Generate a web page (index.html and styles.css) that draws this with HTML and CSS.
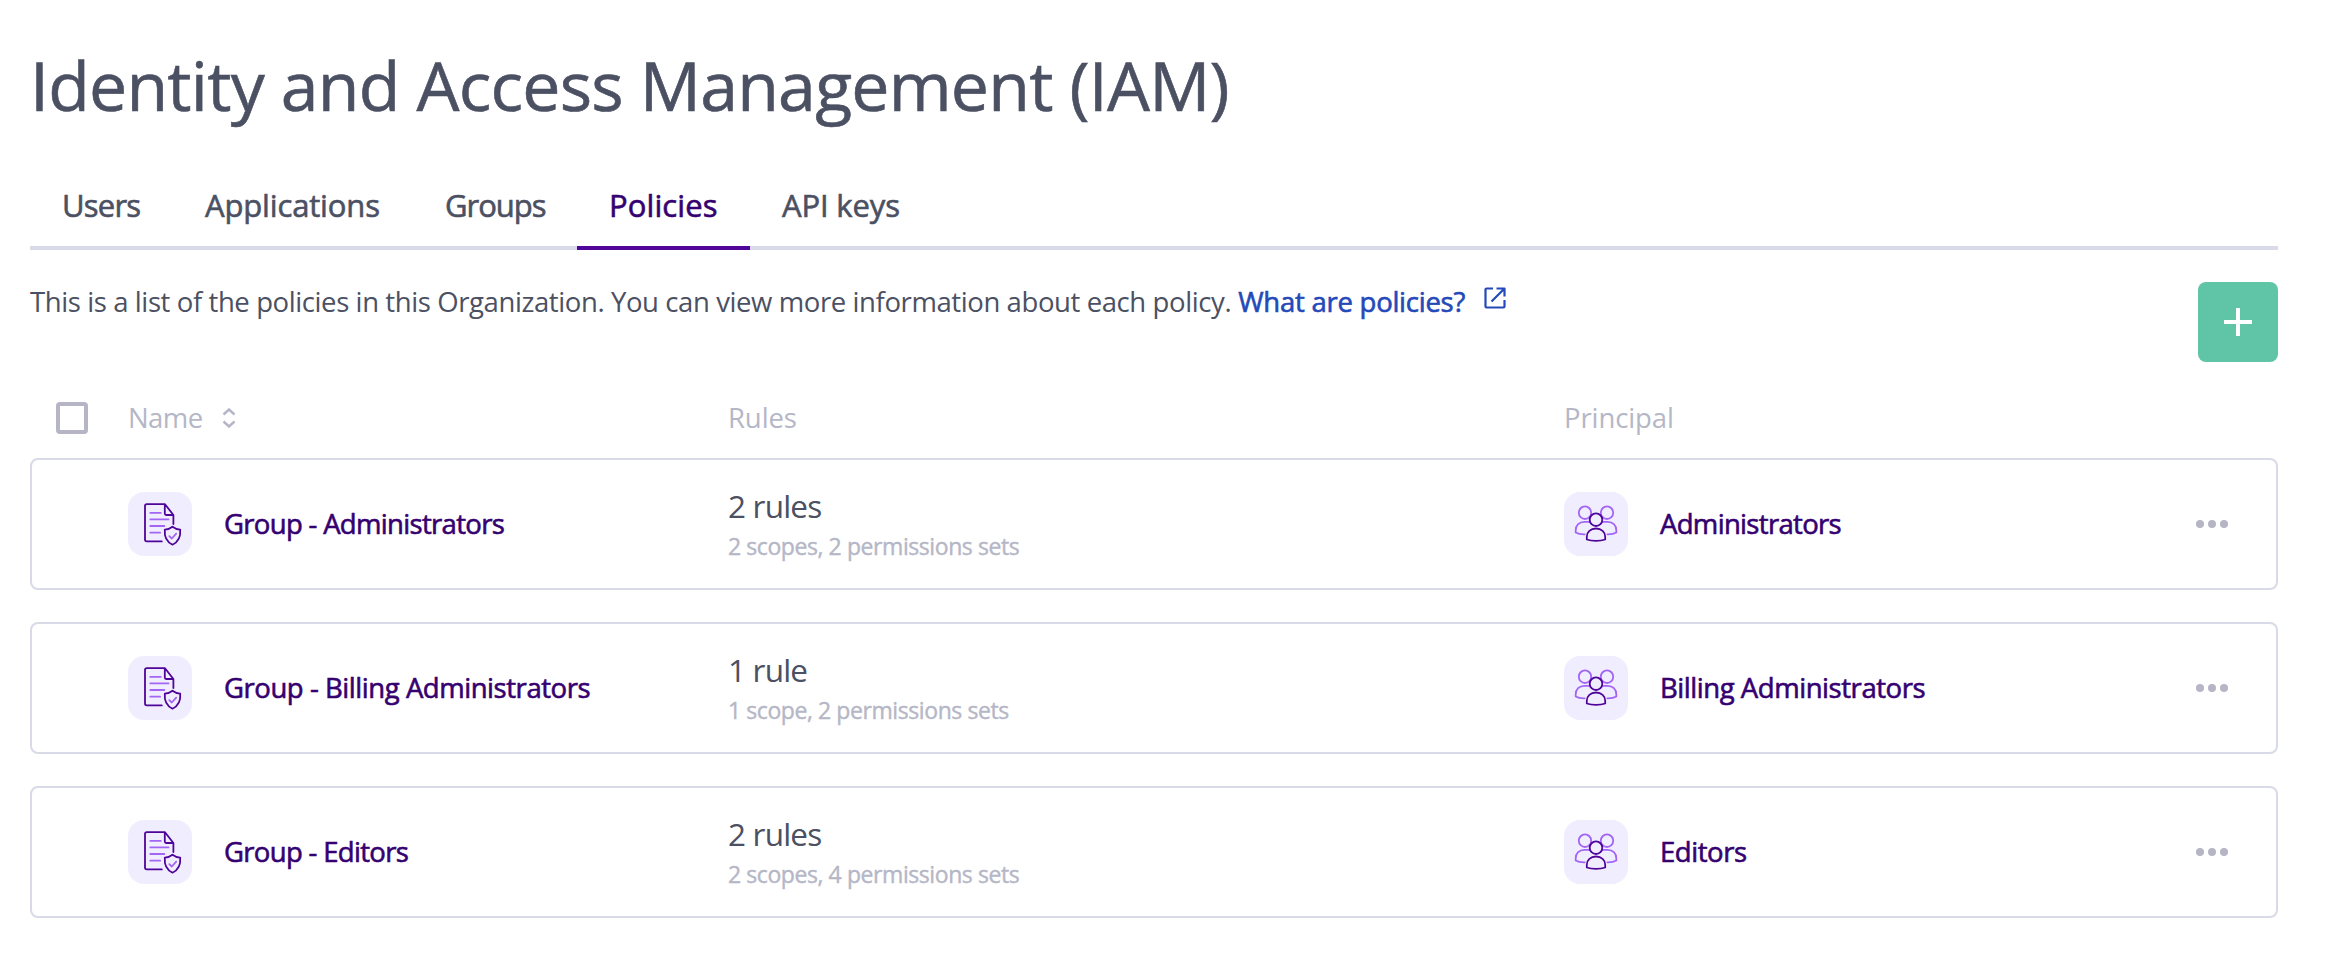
FILE: index.html
```html
<!DOCTYPE html>
<html lang="en">
<head>
<meta charset="utf-8">
<title>Identity and Access Management (IAM)</title>
<link rel="stylesheet" href="styles.css">
</head>
<body>
<svg class="sprite" aria-hidden="true">
  <symbol id="policy" viewBox="0 0 64 64">
    <g fill="none" stroke-width="1.8" stroke-linecap="round" stroke-linejoin="round">
      <path stroke="#4f0599" d="M45.4 32V23L37 12.2H18.8a1.8 1.8 0 0 0-1.8 1.8v33.6a1.8 1.8 0 0 0 1.8 1.8H33.8M36.8 12.6v9a1.4 1.4 0 0 0 1.4 1.4h7"/>
      <path stroke="#4f0599" d="M44.5 34.7c2.4 1.8 4.9 2.8 7.7 3 .6 7.1-1.6 12.2-7.7 15-6.1-2.8-8.3-7.9-7.7-15 2.8-.2 5.300-1.200 7.700-3z"/>
      <path stroke="#a365f6" d="M22.300 20.900h10.500M22.300 27.400h18.200M22.300 34h14M22.300 40.700h9.800M41.300 44.200l2.500 2.300 4.400-4.900"/>
    </g>
  </symbol>
  <symbol id="group" viewBox="0 0 64 64">
    <g fill="none" stroke-width="1.8" stroke-linecap="round" stroke-linejoin="round">
      <path stroke="#a365f6" d="M25.300 29.800h-5c-5 0-8.600 3.500-8.600 8.500v2.200c2.200 1.300 5.200 1.900 9 1.800M38.700 29.800h5c5 0 8.600 3.500 8.600 8.500v2.200c-2.200 1.300-5.200 1.900-9 1.800"/>
      <ellipse stroke="#a365f6" cx="21" cy="20.700" rx="6.200" ry="6.300"/>
      <ellipse stroke="#a365f6" cx="43" cy="20.700" rx="6.200" ry="6.300"/>
      <circle fill="#f0edff" stroke="#4f0599" cx="32" cy="27.700" r="6.300"/>
      <path fill="#f0edff" stroke="#4f0599" d="M22.800 47.500v-2.800c0-4.800 3.800-8.200 9.200-8.200s9.200 3.400 9.200 8.200v2.800c-5 1.900-13.400 1.900-18.400 0z"/>
    </g>
  </symbol>
</svg>
<main class="page">
  <h1 class="title">Identity and Access Management (IAM)</h1>
  <nav class="tabs">
    <a class="tab tab-users">Users</a>
    <a class="tab tab-apps">Applications</a>
    <a class="tab tab-groups">Groups</a>
    <a class="tab tab-policies active">Policies</a>
    <a class="tab">API keys</a>
  </nav>
  <section class="intro">
    <p class="desc"><span>This is a list of the policies in this Organization. You can view more information about each policy.</span><a class="link">What are policies?</a><svg class="external" viewBox="0 0 22 22"><path d="M9 1.500H2.500a1 1 0 0 0-1 1v17a1 1 0 0 0 1 1h17a1 1 0 0 0 1-1V13M12.500 1.500h8v8M20 2L7.500 14.500"/></svg></p>
    <button class="add" aria-label="Add policy"><svg viewBox="0 0 28 28"><path d="M14 0v28M0 14h28"/></svg></button>
  </section>
  <section class="table">
    <div class="row head">
      <div class="check"><span class="box"></span></div>
      <div class="cell name-head">Name<svg class="sort" viewBox="0 0 14 20"><path d="M1.500 6.500L7 1.500l5.500 5M1.500 13.500l5.500 5 5.500-5"/></svg></div>
      <div class="cell">Rules</div>
      <div class="cell">Principal</div>
    </div>
    <div class="row card">
      <div></div>
      <div class="entity"><svg class="avatar"><use href="#policy"/></svg><span class="name tight">Group - Administrators</span></div>
      <div class="rules"><span class="count">2 rules</span><span class="detail">2 scopes, 2 permissions sets</span></div>
      <div class="entity"><svg class="avatar"><use href="#group"/></svg><span class="name tight">Administrators</span></div>
      <div class="more"><i></i><i></i><i></i></div>
    </div>
    <div class="row card">
      <div></div>
      <div class="entity"><svg class="avatar"><use href="#policy"/></svg><span class="name">Group - Billing Administrators</span></div>
      <div class="rules"><span class="count">1 rule</span><span class="detail">1 scope, 2 permissions sets</span></div>
      <div class="entity"><svg class="avatar"><use href="#group"/></svg><span class="name">Billing Administrators</span></div>
      <div class="more"><i></i><i></i><i></i></div>
    </div>
    <div class="row card">
      <div></div>
      <div class="entity"><svg class="avatar"><use href="#policy"/></svg><span class="name tight">Group - Editors</span></div>
      <div class="rules"><span class="count">2 rules</span><span class="detail">2 scopes, 4 permissions sets</span></div>
      <div class="entity"><svg class="avatar"><use href="#group"/></svg><span class="name">Editors</span></div>
      <div class="more"><i></i><i></i><i></i></div>
    </div>
  </section>
</main>
</body>
</html>
```

FILE: styles.css
```css
* { box-sizing: border-box; }
body {
  margin: 0;
  background: #fff;
  color: #4b5062;
  font-family: "Open Sans", "Noto Sans", sans-serif;
  font-size: 27.5px;
  line-height: 40px;
  white-space: nowrap;
}
.sprite { display: none; }
.page { padding: 45px 64px 0 30px; }
.title {
  margin: 0 0 45px;
  font-size: 68px;
  line-height: 80px;
  font-weight: 400;
  letter-spacing: -0.78px;
  -webkit-text-stroke: 0.6px currentColor;
}
.tabs {
  display: flex;
  height: 80px;
  box-shadow: inset 0 -4px #d8dbe7;
}
.tab {
  padding: 15px 32px 21px;
  border-bottom: 4px solid transparent;
  font-size: 31px;
  letter-spacing: -0.15px;
  -webkit-text-stroke: 0.6px currentColor;
}
.tab-users { width: 143px; letter-spacing: -0.8px; }
.tab-apps { width: 240px; }
.tab-groups { width: 164px; letter-spacing: -1px; }
.tab-policies { width: 173px; letter-spacing: 0.1px; }
.active { color: #350070; border-color: #4f0599; }
.intro {
  display: flex;
  justify-content: space-between;
  margin-top: 32px;
}
.desc { display: flex; margin: 0; letter-spacing: -0.4px; }
.link {
  margin-left: 7px;
  color: #2449b8;
  letter-spacing: -0.25px;
  -webkit-text-stroke: 0.6px currentColor;
}
.external { width: 22px; height: 22px; margin: 5px 0 0 19px; }
.external path { fill: none; stroke: #2449b8; stroke-width: 2.2; stroke-linejoin: round; }
.add {
  display: grid;
  place-items: center;
  width: 80px;
  height: 80px;
  padding: 0;
  border: 0;
  border-radius: 8px;
  background: #60c5a6;
}
.add svg { width: 28px; height: 28px; }
.add path { stroke: #fff; stroke-width: 4; }
.table { margin-top: 36px; }
.row {
  display: grid;
  grid-template-columns: 98px 600px 836px 1fr auto;
  align-items: center;
}
.head { height: 40px; margin-bottom: 20px; color: #b5b7c6; letter-spacing: -0.1px; }
.check { padding-left: 26px; }
.box {
  display: block;
  width: 32px;
  height: 32px;
  border: 4px solid #b5b5c5;
  border-radius: 4px;
}
.cell { display: flex; align-items: center; }
.name-head { letter-spacing: -0.6px; }
.sort { width: 14px; height: 20px; margin-left: 19px; }
.sort path { fill: none; stroke: #b5b5c5; stroke-width: 2.4; }
.card {
  height: 132px;
  margin-bottom: 32px;
  padding-right: 48px;
  border: 2px solid #d8dbe7;
  border-radius: 8px;
  grid-template-columns: 96px 600px 836px 1fr auto;
}
.entity { display: flex; align-items: center; gap: 32px; }
.avatar { width: 64px; height: 64px; border-radius: 16px; background: #f0edff; }
.name {
  color: #350070;
  letter-spacing: -0.45px;
  -webkit-text-stroke: 0.6px currentColor;
}
.tight { letter-spacing: -0.68px; }
.rules { display: flex; flex-direction: column; gap: 4px; }
.count { font-size: 31.5px; letter-spacing: -0.8px; }
.detail {
  color: #b5b7c6;
  font-size: 23px;
  line-height: 32px;
  letter-spacing: -0.42px;
  -webkit-text-stroke: 0.4px currentColor;
}
.more { display: flex; gap: 4px; }
.more i { width: 8px; height: 8px; border-radius: 50%; background: #b5b5c5; }
```
